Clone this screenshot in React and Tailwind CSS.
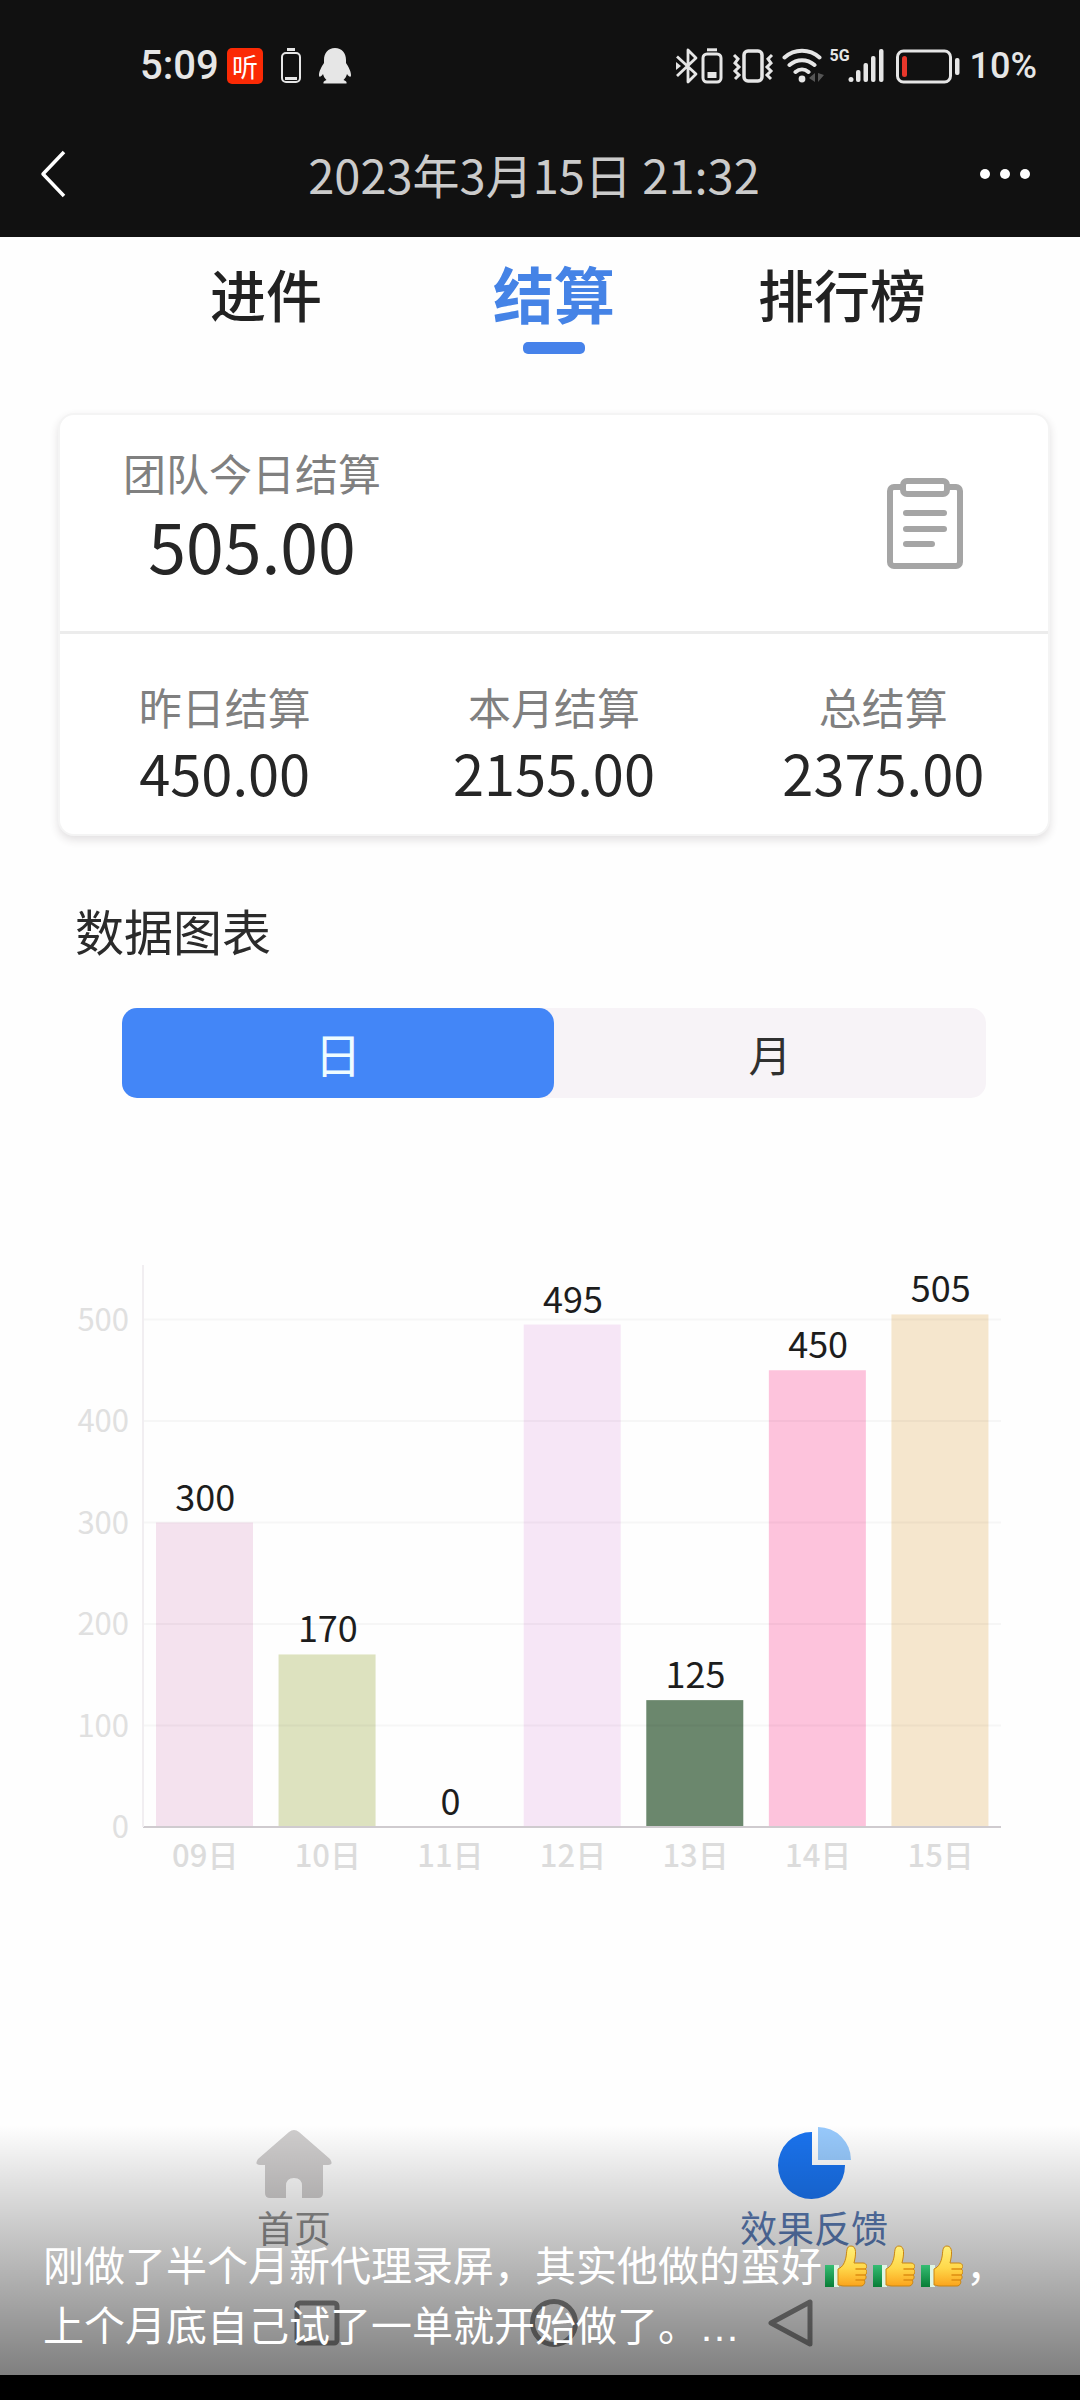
import { useState } from "react";

const tabs = ["进件", "结算", "排行榜"];

const totals = [
  { label: "昨日结算", value: "450.00" },
  { label: "本月结算", value: "2155.00" },
  { label: "总结算", value: "2375.00" },
];

const days = [
  { day: "09日", value: 300, color: "#f4e2ee" },
  { day: "10日", value: 170, color: "#dde2bf" },
  { day: "11日", value: 0, color: "#ffffff" },
  { day: "12日", value: 495, color: "#f6e6f6" },
  { day: "13日", value: 125, color: "#6b876d" },
  { day: "14日", value: 450, color: "#fdc3dc" },
  { day: "15日", value: 505, color: "#f5e6cd" },
];

function StatusBar() {
  return (
    <div className="flex h-[110px] items-center justify-between pt-[22px] pl-[140px] pr-[43px] text-[#e6e6e6]">
      <div className="flex items-center">
        <span className="w-[87px] font-['Roboto',sans-serif] text-[40px] leading-[44px] font-medium">5:09</span>
        <span className="flex h-9 w-9 items-center justify-center rounded-[5px] bg-[#fb2a05] text-[26px] leading-9 text-white">听</span>
        <svg className="ml-[17px] h-9 w-[22px]" viewBox="0 0 22 36" fill="none" stroke="currentColor" strokeWidth="2">
          <path d="M7 1.5h8" strokeWidth="3" />
          <rect x="2" y="5" width="18" height="29" rx="4" />
          <path d="M5 30.500h12" strokeWidth="3" />
        </svg>
        <svg className="ml-[17px] h-9 w-8" viewBox="0 0 32 36" fill="currentColor">
          <path d="M16 0C9 0 5 5 5 12v3C3 18 0 23 0 27c0 3 2 2 4-1 .6 2.500 2 4.500 3.500 6C5 33 4 34 4.500 35.500h23C28 34 27 33 24.500 32c1.500-1.500 2.900-3.500 3.500-6 2 3 4 4 4 1 0-4-3-9-5-12v-3C27 5 23 0 16 0z" />
        </svg>
      </div>
      <div className="flex items-center">
        <svg className="h-9 w-[22px]" viewBox="0 0 22 36" fill="none" stroke="currentColor" strokeWidth="2.800" strokeLinejoin="round">
          <path d="M1 8.500l19 17.500-8 8V2l8 8L1 28" />
          <path d="M0 14l5 4-5 4z" fill="currentColor" stroke="none" />
        </svg>
        <svg className="ml-[3px] h-9 w-[22px]" viewBox="0 0 22 36" fill="none" stroke="currentColor" strokeWidth="3">
          <path d="M6 1.800h10" />
          <rect x="2" y="6" width="18" height="28" rx="4" />
          <path d="M6.500 27h9" strokeWidth="6" />
        </svg>
        <svg className="ml-[9px] h-9 w-[42px]" viewBox="0 0 42 36" fill="none" stroke="currentColor" strokeWidth="3">
          <rect x="12" y="3" width="18" height="30" rx="4" strokeWidth="3.500" />
          <path d="M2 7l4 4-3 4 4 4-4 4 4 4-4 4M40 7l-4 4 3 4-4 4 4 4-4 4 4 4" />
        </svg>
        <svg className="ml-2 h-9 w-[42px]" viewBox="0 0 42 36" fill="none" stroke="currentColor" strokeWidth="4" strokeLinecap="round">
          <path d="M2.500 9.500c10-9 25-9 35 0M7.500 17c7.500-6.500 17.500-6.500 25 0M13.500 24c4-3.500 9-3.500 13 0" />
          <circle cx="20" cy="31" r="3.400" fill="currentColor" stroke="none" />
          <path d="M33 25v9l-6-4zM36 25v9l6-7z" fill="#555" stroke="none" />
        </svg>
        <div className="ml-[6px] flex">
          <span className="w-[18px] font-['Roboto',sans-serif] text-[16px] leading-4 font-bold">5G</span>
          <svg className="h-9 w-9" viewBox="0 0 36 36" fill="currentColor">
            <circle cx="3" cy="31.500" r="2.500" />
            <rect x="8" y="22" width="4.500" height="12" rx="2" />
            <rect x="15.500" y="15" width="4.500" height="19" rx="2" />
            <rect x="23" y="8" width="4.500" height="26" rx="2" />
            <rect x="31" y="1" width="4.500" height="33" rx="2" />
          </svg>
        </div>
        <svg className="ml-3 h-9 w-16" viewBox="0 0 64 36" fill="none">
          <rect x="1.500" y="3" width="53" height="31" rx="6" stroke="currentColor" strokeWidth="3" />
          <rect x="6" y="8" width="5" height="21" rx="2.500" fill="#e8372b" />
          <rect x="59" y="10" width="4.500" height="17" rx="2" fill="currentColor" />
        </svg>
        <span className="ml-[10px] font-['Roboto',sans-serif] text-[36px] leading-[44px] font-medium">10%</span>
      </div>
    </div>
  );
}

function Header() {
  return (
    <header className="flex h-[127px] items-center justify-between pl-[38px] pr-[50px]">
      <button type="button" aria-label="返回" className="w-[52px] text-white">
        <svg className="h-12 w-7" viewBox="0 0 28 48" fill="none" stroke="currentColor" strokeWidth="3.500" strokeLinejoin="round">
          <path d="M26 2L5 24l21 22" />
        </svg>
      </button>
      <h1 className="text-[47px] leading-[56px] text-[#cbcbcb]">2023年3月15日 21:32</h1>
      <button type="button" aria-label="更多" className="flex w-[52px] items-center justify-end gap-[10px]">
        <span className="h-[10px] w-[10px] rounded-full bg-white" />
        <span className="h-[10px] w-[10px] rounded-full bg-white" />
        <span className="h-[10px] w-[10px] rounded-full bg-white" />
      </button>
    </header>
  );
}

function Tabs() {
  const [active, setActive] = useState("结算");

  return (
    <nav className="mx-[94px] grid h-[117px] grid-cols-3 pt-[18px]">
      {tabs.map((t) => (
        <button
          key={t}
          type="button"
          onClick={() => setActive(t)}
          className={`flex flex-col items-center leading-[76px] ${
            t === active ? "text-[61px] font-bold text-[#4583e6]" : "text-[56px] font-medium text-[#222]"
          }`}
        >
          {t}
          {t === active && <span className="mt-[11px] h-3 w-[62px] rounded-[5px] bg-[#4682ea]" />}
        </button>
      ))}
    </nav>
  );
}

function SummaryCard() {
  return (
    <section className="mx-[30px] mt-[59px] rounded-[16px] border-2 border-[#f4f4f4] bg-white shadow-[0_4px_8px_rgba(60,40,50,0.14)]">
      <div className="flex items-center justify-between border-b-3 border-[#ececec] pt-[27px] pr-[85px] pb-[43px] pl-[63px]">
        <div className="text-center">
          <p className="text-[43px] leading-[60px] text-[#808080]">团队今日结算</p>
          <p className="text-[68px] leading-[86px] text-[#262626]">505.00</p>
        </div>
        <svg className="mt-4 h-[92px] w-[76px]" viewBox="0 0 76 92" fill="none" stroke="#a5a5a5" strokeWidth="6" strokeLinecap="round" strokeLinejoin="round">
          <path d="M14 10H7a4 4 0 0 0-4 4v71a4 4 0 0 0 4 4h62a4 4 0 0 0 4-4V14a4 4 0 0 0-4-4h-7" />
          <rect x="16" y="4" width="44" height="13" rx="4" />
          <path d="M19 36h38M19 52h38M19 67h26" />
        </svg>
      </div>
      <dl className="grid grid-cols-3 pt-[44px] pb-[25px] text-center">
        {totals.map((item) => (
          <div key={item.label}>
            <dt className="text-[43px] leading-[56px] text-[#808080]">{item.label}</dt>
            <dd className="text-[56px] leading-[75px] text-[#262626]">{item.value}</dd>
          </div>
        ))}
      </dl>
    </section>
  );
}

function RangeSwitch() {
  const [range, setRange] = useState("日");

  return (
    <div className="mx-[94px] mt-12 grid h-[90px] grid-cols-2 rounded-[15px] bg-[#f7f3f7]">
      {["日", "月"].map((r) => (
        <button
          key={r}
          type="button"
          onClick={() => setRange(r)}
          className={`rounded-[15px] ${
            r === range ? "bg-[#4386f7] text-[47px] text-[#effcff]" : "text-[43px] text-[#303030]"
          }`}
        >
          {r}
        </button>
      ))}
    </div>
  );
}

function BarChart() {
  const left = 115;
  const right = 973;
  const base = 586;
  const unit = 1.015;
  const col = (right - left) / days.length;

  return (
    <svg className="mt-[143px] w-full" viewBox="0 0 1052 650" role="img" aria-label="数据图表">
      {days.map((d, i) => (
        <g key={d.day} textAnchor="middle">
          <rect x={left + col * i + 13} y={base - d.value * unit} width={97} height={d.value * unit} fill={d.color} />
          <text x={left + col * (i + 0.5) + 1} y={base - d.value * unit - 12} className="fill-[#1d1d1d] text-[36px]">
            {d.value}
          </text>
          <text x={left + col * (i + 0.5) + 1} y={base + 40} className="fill-[#dcdcdc] text-[31px] font-medium">
            {d.day}
          </text>
        </g>
      ))}
      {[0, 100, 200, 300, 400, 500].map((n) => (
        <g key={n}>
          <line x1={left} x2={right} y1={base - n * unit} y2={base - n * unit} strokeWidth="2" stroke={n === 0 ? "#cfcbcf" : "rgba(0,0,0,0.03)"} />
          <text x="101" y={base - n * unit + 11} textAnchor="end" className="fill-[#e0e0e0] text-[31px]">
            {n}
          </text>
        </g>
      ))}
      <line x1={left} x2={left} y1="24" y2={base} stroke="#f1eef1" strokeWidth="2" />
    </svg>
  );
}

function BottomNav() {
  return (
    <nav className="mx-[6px] mt-auto grid grid-cols-2 text-[37px] leading-[44px]">
      <a href="#home" className="flex flex-col items-center gap-[6px] text-[#8f8f8f]">
        <svg className="h-[72px] w-[76px]" viewBox="0 0 76 72" fill="#cfcdcd">
          <path d="M33 5q5-4 10 0l31 27q4 6-2 6h-5v28q0 5-5 5h-16V59q0-8-8-8t-8 8v12H14q-5 0-5-5V38H4q-6 0-2-6z" />
        </svg>
        首页
      </a>
      <a href="#report" className="flex flex-col items-center gap-[6px] text-[#5b7cb5]">
        <svg className="h-[72px] w-[76px]" viewBox="0 0 76 72">
          <path d="M36 5v33h33A33.500 33.500 0 1 1 36 5z" fill="#1a73ee" />
          <path d="M42 0a33 33 0 0 1 33 33H42z" fill="#97c9fc" />
        </svg>
        效果反馈
      </a>
    </nav>
  );
}

function SystemKeys() {
  return (
    <div className="mx-[170px] mt-[50px] mb-[28px] grid grid-cols-3 justify-items-center">
      <button type="button" aria-label="最近任务">
        <svg className="h-12 w-12" viewBox="0 0 48 48" fill="none" stroke="#8a8a8a" strokeWidth="5">
          <rect x="4" y="4" width="40" height="40" rx="3" />
        </svg>
      </button>
      <button type="button" aria-label="主屏幕">
        <svg className="h-12 w-12" viewBox="0 0 48 48" fill="none" stroke="#8a8a8a" strokeWidth="5">
          <circle cx="24" cy="24" r="21.500" />
        </svg>
      </button>
      <button type="button" aria-label="后退">
        <svg className="h-12 w-12" viewBox="0 0 48 48" fill="none" stroke="#8a8a8a" strokeWidth="5" strokeLinejoin="round">
          <path d="M43 3v42L4 24z" />
        </svg>
      </button>
    </div>
  );
}

function ThumbUp() {
  return (
    <svg className="mx-[3px] -mt-2 inline-block h-[42px] w-[42px]" viewBox="0 0 42 42">
      <defs>
        <linearGradient id="hand" x1="0" y1="0" x2="0" y2="1">
          <stop offset="0" stopColor="#fff07a" />
          <stop offset="0.550" stopColor="#ffd84a" />
          <stop offset="1" stopColor="#fba41c" />
        </linearGradient>
        <linearGradient id="cuff" x1="0" y1="0" x2="0" y2="1">
          <stop offset="0" stopColor="#35bd73" />
          <stop offset="1" stopColor="#087d36" />
        </linearGradient>
      </defs>
      <path d="M0 20h10v22H0z" fill="url(#cuff)" />
      <path d="M9 20h5v22H9z" fill="#dff5e4" />
      <path
        d="M13 24c5-2 7-7 8-12 1-5 0-11 5-11 6 0 5 9 3 17h9c4 0 5 5 2 6 3 1 2 5 0 6 2 1 1 5-1 5 2 2 0 6-3 6H19c-3 0-4-1-6-1z"
        fill="url(#hand)"
        stroke="#c98512"
        strokeWidth="1"
      />
      <path d="M31 24h9M31 30h9M31 35h8" fill="none" stroke="#dd8d12" strokeWidth="1.500" strokeLinecap="round" />
    </svg>
  );
}

export default function App() {
  return (
    <div className="flex min-h-screen flex-col bg-[#111] font-['Noto_Sans_CJK_SC',sans-serif]" lang="zh-CN">
      <StatusBar />
      <Header />

      <main className="relative flex flex-1 flex-col bg-[#fefefe] pl-[28px]">
        <Tabs />
        <SummaryCard />
        <h2 className="mt-[64px] ml-[47px] text-[49px] leading-[60px] text-[#2b2b2b]">数据图表</h2>
        <RangeSwitch />
        <BarChart />
        <BottomNav />
        <SystemKeys />

        {/* Caption over the lower part of the shot */}
        <div className="pointer-events-none absolute inset-x-0 bottom-0 flex h-[250px] items-end bg-linear-to-b from-black/0 to-black/50 pr-9 pb-[18px] pl-[43px]">
          <p className="text-[41px] leading-[60px] text-white">
            刚做了半个月新代理录屏，其实他做的蛮好
            <ThumbUp />
            <ThumbUp />
            <ThumbUp />
            ，<br />
            上个月底自己试了一单就开始做了。
            <span className="font-['Liberation_Sans',sans-serif]">…</span>
          </p>
        </div>
      </main>

      <div className="h-[25px] bg-black" />
    </div>
  );
}
